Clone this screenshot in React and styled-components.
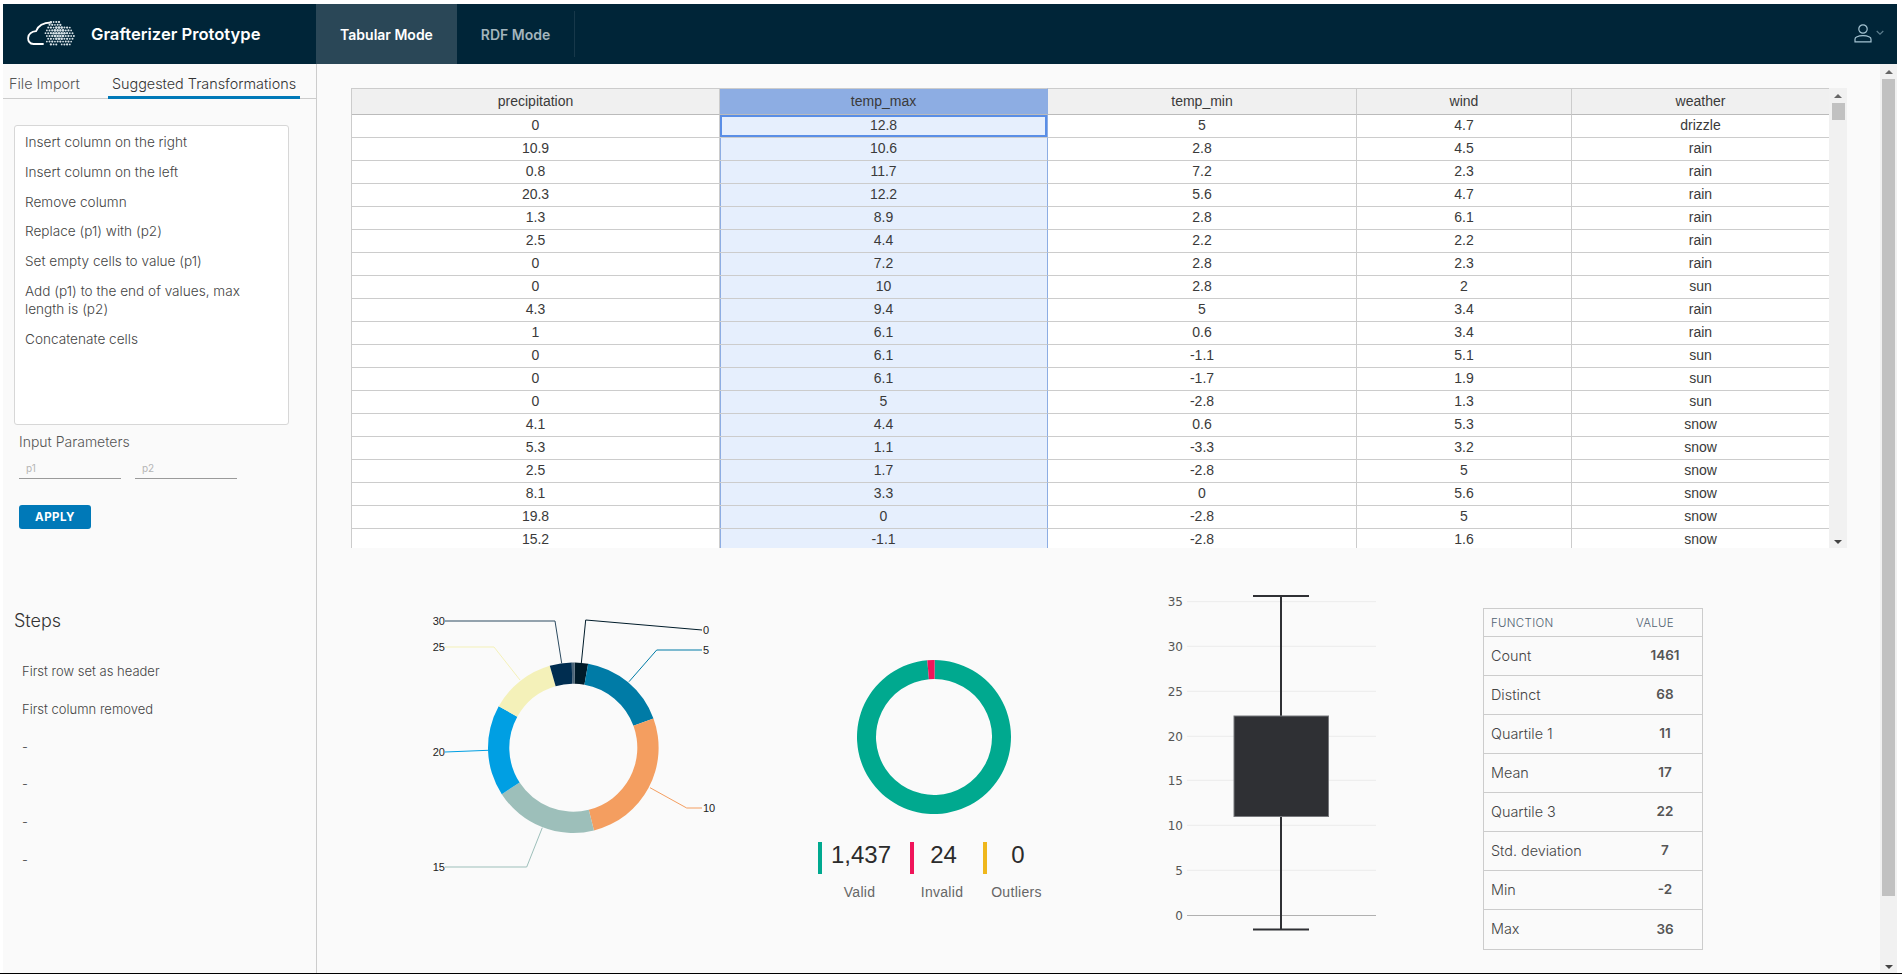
import React from 'react';
import styled, { createGlobalStyle } from 'styled-components';

const GlobalStyle = createGlobalStyle`
  * { box-sizing: border-box; }
  html, body { margin: 0; padding: 0; background: #fff; }
  body { font-family: Inter, "Open Sans", sans-serif; color: #565656; }
`;

const Page = styled.div`
  width: 1902px;
  height: 974px;
  padding: 4px 5px 0 3px;
  border-bottom: 1px solid #000;
  display: flex;
  flex-direction: column;
  overflow: hidden;
`;

const Header = styled.header`
  height: 60px;
  flex: none;
  display: flex;
  align-items: stretch;
  background: #002538;
`;

const Brand = styled.div`
  width: 313px;
  padding-left: 24px;
  display: flex;
  align-items: center;
  gap: 16px;
`;

const BrandName = styled.span`
  color: #fff;
  font-size: 16.6px;
  font-weight: 600;
  white-space: nowrap;
`;

const ModeTab = styled.div`
  width: ${(p) => p.$width}px;
  display: flex;
  align-items: center;
  justify-content: center;
  font-size: 14px;
  font-weight: 600;
  color: ${(p) => (p.$active ? '#fff' : '#a3b4bd')};
  background: ${(p) => (p.$active ? '#2a4757' : 'transparent')};
`;

const ModeDivider = styled.div`
  width: 1px;
  height: 46px;
  margin-top: 7px;
  background: #17384a;
`;

const UserBox = styled.div`
  margin-left: auto;
  padding: 20px 13px 0 0;
  display: flex;
  gap: 4px;
`;

const Body = styled.div`
  flex: 1;
  min-height: 0;
  display: flex;
`;

const Sidebar = styled.aside`
  width: 314px;
  flex: none;
  background: #fafafa;
  border-right: 1px solid #ccc;
`;

const SideTabs = styled.div`
  height: 35px;
  display: grid;
  grid-template-columns: 105px 192px;
  border-bottom: 1px solid #ccc;
  font-size: 14.4px;
  font-weight: 300;
  line-height: 40px;
`;

const SideTab = styled.div`
  padding-left: ${(p) => (p.$active ? '0' : '6px')};
  text-align: ${(p) => (p.$active ? 'center' : 'left')};
  color: ${(p) => (p.$active ? '#333' : '#555')};
  white-space: nowrap;
  border-bottom: ${(p) => (p.$active ? '3px solid #0079b8' : 'none')};
  height: 35px;
`;

const Panel = styled.div`
  padding: 26px 0 0 11px;
`;

const ListBox = styled.div`
  width: 275px;
  height: 300px;
  padding: 1px 12px 2px 10px;
  background: #fff;
  border: 1px solid #d7d7d7;
  border-radius: 3px;
`;

const ListItem = styled.div`
  padding: 6px 0 5.8px;
  font-size: 13.6px;
  font-weight: 300;
  line-height: 18px;
  color: #444;
`;

const ParamTitle = styled.div`
  margin: 8px 0 0 5px;
  font-size: 14px;
  font-weight: 300;
  line-height: 18px;
  color: #555;
`;

const ParamRow = styled.div`
  margin: 8px 0 0 5px;
  display: flex;
  gap: 14px;
`;

const ParamInput = styled.input`
  width: 102px;
  height: 20px;
  padding: 0 7px 2px;
  border: none;
  border-bottom: 1px solid #9a9a9a;
  background: transparent;
  font-family: inherit;
  font-size: 10px;
  &::placeholder { color: #b5b5b5; }
`;

const ApplyButton = styled.button`
  display: block;
  width: 72px;
  height: 24px;
  margin: 26px 0 0 5px;
  padding: 0;
  border: none;
  border-radius: 3px;
  background: #0079b8;
  color: #fff;
  font-family: inherit;
  font-size: 11.5px;
  font-weight: 700;
  letter-spacing: 0.5px;
`;

const StepsTitle = styled.h3`
  margin: 80px 0 0;
  font-size: 18px;
  font-weight: 300;
  line-height: 24px;
  color: #333;
`;

const StepList = styled.div`
  margin-top: 19px;
  padding-left: 8px;
`;

const StepItem = styled.div`
  height: 37.8px;
  font-size: 13px;
  font-weight: 300;
  line-height: 38px;
  color: #444;
`;

const Main = styled.main`
  flex: 1;
  min-width: 0;
  display: flex;
  background: #fafafa;
`;

const Content = styled.div`
  flex: 1;
  min-width: 0;
  padding: 24px 0 0 34px;
`;

const TableFrame = styled.div`
  width: 1496px;
  height: 460px;
  display: flex;
`;

const TableClip = styled.div`
  width: 1478px;
  height: 460px;
  overflow: hidden;
  background: #fff;
`;

const DataTable = styled.table`
  width: 1478px;
  table-layout: fixed;
  border-collapse: separate;
  border-spacing: 0;
  font-family: "Liberation Sans", Arial, sans-serif;
  font-size: 14px;
  color: #3a3a3a;
  border-left: 1px solid #ccc;
`;

const HeadCell = styled.th`
  height: 27px;
  padding: 0 0 2px;
  font-weight: 400;
  text-align: center;
  background: ${(p) => (p.$selected ? '#8dade3' : '#f0f0f0')};
  color: #3a3a3a;
  border-top: 1px solid #ccc;
  border-bottom: 1px solid #bbb;
  border-right: 1px solid ${(p) => (p.$selected ? '#8dade3' : '#ccc')};
`;

const Cell = styled.td`
  height: 23px;
  padding: 0 0 2px;
  text-align: center;
  background: ${(p) => (p.$selected ? '#e6effd' : '#fff')};
  border-bottom: 1px solid #ccc;
  border-right: 1px solid ${(p) => (p.$selected ? '#8dade3' : '#ccc')};
  box-shadow: ${(p) => {
    if (p.$focused) return 'inset 0 0 0 2px #5a8ee6';
    return p.$selected ? 'inset 1px 0 0 #8dade3' : 'none';
  }};
`;

const ScrollTrack = styled.div`
  width: ${(p) => p.$width}px;
  flex: none;
  height: ${(p) => p.$height};
  padding: 0 2px;
  display: flex;
  flex-direction: column;
  align-items: center;
  background: #f1f1f1;
`;

const ArrowUp = styled.div`
  width: 0;
  height: 0;
  margin: 6px 0 5px;
  border-left: 4px solid transparent;
  border-right: 4px solid transparent;
  border-bottom: 4px solid #666;
`;

const ArrowDown = styled.div`
  width: 0;
  height: 0;
  margin: auto 0 4px;
  border-left: 4px solid transparent;
  border-right: 4px solid transparent;
  border-top: 4px solid #444;
`;

const ScrollThumb = styled.div`
  width: 13px;
  height: ${(p) => p.$height}px;
  background: #c1c1c1;
`;

const ChartRow = styled.div`
  margin-top: 32px;
  padding-left: 69px;
  display: flex;
  align-items: flex-start;
`;

const PieBox = styled.div`
  width: 320px;
  height: 300px;
  margin-top: 10px;
`;

const QualityBox = styled.div`
  width: 248px;
  margin: 80px 0 0 70px;
  display: flex;
  flex-direction: column;
  align-items: center;
`;

const Legend = styled.div`
  width: 100%;
  margin-top: 28px;
  padding-left: 8px;
  display: grid;
  grid-template-columns: 92px 73px 76px;
`;

const LegendValue = styled.div`
  height: 32px;
  padding-right: 10px;
  border-left: 4px solid ${(p) => p.$color};
  font-family: "Liberation Sans", Arial, sans-serif;
  font-size: 24px;
  line-height: 26px;
  color: #2b2b2b;
  text-align: center;
`;

const LegendLabel = styled.div`
  margin-top: 9px;
  padding-right: 9px;
  font-family: "Liberation Sans", Arial, sans-serif;
  font-size: 14px;
  letter-spacing: 0.3px;
  line-height: 18px;
  color: #666;
  text-align: center;
  white-space: nowrap;
`;

const BoxBox = styled.div`
  width: 300px;
  height: 370px;
  margin-left: 72px;
`;

const StatsTable = styled.div`
  width: 220px;
  margin: 28px 0 0 53px;
  border: 1px solid #ccc;
  background: #fafafa;
`;

const StatsRow = styled.div`
  height: ${(p) => (p.$head ? '28px' : '39px')};
  display: grid;
  grid-template-columns: 145px 1fr;
  align-items: center;
  padding-left: 7px;
  padding-bottom: ${(p) => (p.$head ? '0' : '2px')};
  border-bottom: ${(p) => (p.$last ? 'none' : '1px solid #ccc')};
`;

const StatsHead = styled.span`
  font-size: 11.5px;
  font-weight: 300;
  letter-spacing: 0.3px;
  text-transform: uppercase;
  color: #4f6170;
  text-align: ${(p) => (p.$center ? 'center' : 'left')};
  padding-right: ${(p) => (p.$center ? '30px' : '0')};
`;

const StatsName = styled.span`
  font-size: 14.4px;
  font-weight: 300;
  color: #444;
`;

const StatsValue = styled.span`
  font-size: 13.5px;
  font-weight: 600;
  color: #555;
  text-align: center;
  padding-right: 8px;
`;

const columns = ['precipitation', 'temp_max', 'temp_min', 'wind', 'weather'];
const columnWidths = [368, 328, 309, 215, 258];

const rows = [
  ['0', '12.8', '5', '4.7', 'drizzle'],
  ['10.9', '10.6', '2.8', '4.5', 'rain'],
  ['0.8', '11.7', '7.2', '2.3', 'rain'],
  ['20.3', '12.2', '5.6', '4.7', 'rain'],
  ['1.3', '8.9', '2.8', '6.1', 'rain'],
  ['2.5', '4.4', '2.2', '2.2', 'rain'],
  ['0', '7.2', '2.8', '2.3', 'rain'],
  ['0', '10', '2.8', '2', 'sun'],
  ['4.3', '9.4', '5', '3.4', 'rain'],
  ['1', '6.1', '0.6', '3.4', 'rain'],
  ['0', '6.1', '-1.1', '5.1', 'sun'],
  ['0', '6.1', '-1.7', '1.9', 'sun'],
  ['0', '5', '-2.8', '1.3', 'sun'],
  ['4.1', '4.4', '0.6', '5.3', 'snow'],
  ['5.3', '1.1', '-3.3', '3.2', 'snow'],
  ['2.5', '1.7', '-2.8', '5', 'snow'],
  ['8.1', '3.3', '0', '5.6', 'snow'],
  ['19.8', '0', '-2.8', '5', 'snow'],
  ['15.2', '-1.1', '-2.8', '1.6', 'snow'],
];

const transformations = [
  'Insert column on the right',
  'Insert column on the left',
  'Remove column',
  'Replace (p1) with (p2)',
  'Set empty cells to value (p1)',
  'Add (p1) to the end of values, max length is (p2)',
  'Concatenate cells',
];

const steps = ['First row set as header', 'First column removed', '-', '-', '-', '-'];

const stats = [
  ['Count', '1461'],
  ['Distinct', '68'],
  ['Quartile 1', '11'],
  ['Mean', '17'],
  ['Quartile 3', '22'],
  ['Std. deviation', '7'],
  ['Min', '-2'],
  ['Max', '36'],
];

// clockwise degrees from 12 o'clock
const arc = (cx, cy, r1, r2, from, to) => {
  const pt = (r, a) => {
    const rad = ((a - 90) * Math.PI) / 180;
    return `${(cx + r * Math.cos(rad)).toFixed(2)} ${(cy + r * Math.sin(rad)).toFixed(2)}`;
  };
  const large = to - from > 180 ? 1 : 0;
  return `M${pt(r1, from)}A${r1} ${r1} 0 ${large} 1 ${pt(r1, to)}L${pt(r2, to)}A${r2} ${r2} 0 ${large} 0 ${pt(r2, from)}Z`;
};

const pieSlices = [
  { from: 1, to: 10, color: '#001b29' },
  { from: 10, to: 70, color: '#007ba6' },
  { from: 70, to: 166, color: '#f49e60' },
  { from: 166, to: 237, color: '#9dbfba' },
  { from: 237, to: 299, color: '#009fe3' },
  { from: 299, to: 344, color: '#f4f1b9' },
  { from: 344, to: 359, color: '#002d50' },
  { from: 359, to: 361, color: '#4a6478' },
];

const pieLabels = [
  { text: '30', x: 25, y: 31, points: '25,31 135,31 141.7,73.3', color: '#2c4a60', side: 'end' },
  { text: '0', x: 282, y: 40, points: '282,40 165.7,30 161.3,73.3', color: '#001b29', side: 'start' },
  { text: '5', x: 282, y: 60, points: '282,60 236.7,60 209,91.7', color: '#007ba6', side: 'start' },
  { text: '10', x: 282, y: 218, points: '282,218 266.7,218 230,197.7', color: '#f49e60', side: 'start' },
  { text: '15', x: 25, y: 277, points: '25,277 106.7,277 122.3,237.7', color: '#9dbfba', side: 'end' },
  { text: '20', x: 25, y: 162, points: '25,162 68,160.3', color: '#009fe3', side: 'end' },
  { text: '25', x: 25, y: 57, points: '25,57 74,57 100,90', color: '#f4f1b9', side: 'end' },
];

const boxTicks = [
  { label: '35', y: 21.7 },
  { label: '30', y: 66.3 },
  { label: '25', y: 111.3 },
  { label: '20', y: 156.3 },
  { label: '15', y: 200.3 },
  { label: '10', y: 245.3 },
  { label: '5', y: 290.3 },
];

// the right half of the logo is a cloud made of dots
const cloudDots = [];
for (let row = 0; row < 9; row += 1) {
  for (let col = 0; col < 11; col += 1) {
    const x = 18.5 + col * 2.7 + (row % 2 ? 1.35 : 0);
    const y = 1 + row * 2.8;
    const inside =
      Math.hypot(x - 28, y - 10) < 10 ||
      Math.hypot(x - 38, y - 15) < 10 ||
      Math.hypot(x - 26, y - 18) < 7;
    const middle = Math.hypot(x - 32, y - 13) < 7;
    if (inside) cloudDots.push({ x, y, r: middle ? 1.3 : 0.9 + ((col * 7 + row * 3) % 3) * 0.12 });
  }
}

const Logo = () => (
  <svg width="48" height="26" viewBox="0 0 48 26" fill="none">
    <path
      d="M16 23H6.5C2.5 23 .8 19.5 1.2 16.5C1.8 12.8 5 10.6 9 10.2C11 5 16.5 1.6 24 1.5"
      stroke="#fff"
      strokeWidth="1.8"
      strokeLinecap="round"
    />
    {cloudDots.map((d) => (
      <circle key={`${d.x}-${d.y}`} cx={d.x} cy={d.y} r={d.r} fill="#d8e2e7" />
    ))}
  </svg>
);

const UserIcon = () => (
  <svg width="18" height="19" viewBox="0 0 18 19" fill="none" stroke="#a4c4d2" strokeWidth="1.2">
    <circle cx="9" cy="5" r="4.2" />
    <path d="M1 17.8v-2.6c0-1 .6-1.8 1.5-2.2C4.3 12.2 6.5 11.7 9 11.7s4.7.5 6.5 1.3c.9.4 1.5 1.2 1.5 2.2v2.6z" />
  </svg>
);

const Chevron = () => (
  <svg width="8" height="6" viewBox="0 0 8 6" fill="none" stroke="#5d7f8e" strokeWidth="1.1" style={{ marginTop: 6 }}>
    <path d="M.7 1l3.3 3.2L7.3 1" />
  </svg>
);

const PieChart = () => (
  <svg width="320" height="300" viewBox="0 0 320 300">
    {pieSlices.map((s) => (
      <path key={s.from} d={arc(153.3, 157.7, 85.3, 64, s.from, s.to)} fill={s.color} />
    ))}
    {pieLabels.map((l) => (
      <g key={l.text}>
        <polyline points={l.points} fill="none" stroke={l.color} strokeWidth="1" />
        <text
          x={l.side === 'end' ? l.x : l.x + 1}
          y={l.y + 4}
          textAnchor={l.side}
          fontFamily="Liberation Sans, Arial, sans-serif"
          fontSize="11"
          fill="#222"
        >
          {l.text}
        </text>
      </g>
    ))}
  </svg>
);

const QualityRing = () => (
  <svg width="154" height="154" viewBox="0 0 154 154">
    <path d={arc(77, 77, 77, 58, 0.5, 355)} fill="#00a98f" />
    <path d={arc(77, 77, 77, 58, 355, 360.5)} fill="#f0145a" />
  </svg>
);

const BoxPlot = () => (
  <svg width="300" height="370" viewBox="0 0 300 370">
    {boxTicks.map((t) => (
      <line key={t.label} x1="57" x2="246" y1={t.y} y2={t.y} stroke="#ececec" strokeWidth="1" />
    ))}
    <line x1="57" x2="246" y1="335.5" y2="335.5" stroke="#b0b0b0" strokeWidth="1" />
    {[...boxTicks, { label: '0', y: 335.3 }].map((t) => (
      <text
        key={t.label}
        x="53"
        y={t.y + 4.5}
        textAnchor="end"
        fontFamily="DejaVu Sans, sans-serif"
        fontSize="12"
        fill="#555"
      >
        {t.label}
      </text>
    ))}
    <line x1="151" x2="151" y1="16" y2="349.5" stroke="#2f3034" strokeWidth="2" />
    <line x1="123" x2="179" y1="16" y2="16" stroke="#2f3034" strokeWidth="2" />
    <line x1="123" x2="179" y1="349.5" y2="349.5" stroke="#2f3034" strokeWidth="2" />
    <rect x="104" y="136" width="94.5" height="100.5" fill="#2f3034" stroke="#77787c" strokeWidth="1" />
  </svg>
);

const App = () => (
  <Page>
    <GlobalStyle />
    <Header>
      <Brand>
        <Logo />
        <BrandName>Grafterizer Prototype</BrandName>
      </Brand>
      <ModeTab $width={141} $active>Tabular Mode</ModeTab>
      <ModeTab $width={117}>RDF Mode</ModeTab>
      <ModeDivider />
      <UserBox>
        <UserIcon />
        <Chevron />
      </UserBox>
    </Header>
    <Body>
      <Sidebar>
        <SideTabs>
          <SideTab>File Import</SideTab>
          <SideTab $active>Suggested Transformations</SideTab>
        </SideTabs>
        <Panel>
          <ListBox>
            {transformations.map((item) => (
              <ListItem key={item}>{item}</ListItem>
            ))}
          </ListBox>
          <ParamTitle>Input Parameters</ParamTitle>
          <ParamRow>
            <ParamInput placeholder="p1" />
            <ParamInput placeholder="p2" />
          </ParamRow>
          <ApplyButton>APPLY</ApplyButton>
          <StepsTitle>Steps</StepsTitle>
          <StepList>
            {steps.map((step, i) => (
              <StepItem key={i}>{step}</StepItem>
            ))}
          </StepList>
        </Panel>
      </Sidebar>
      <Main>
        <Content>
          <TableFrame>
            <TableClip>
              <DataTable>
                <colgroup>
                  {columnWidths.map((w, i) => (
                    <col key={i} width={w} />
                  ))}
                </colgroup>
                <thead>
                  <tr>
                    {columns.map((c, i) => (
                      <HeadCell key={c} $selected={i === 1}>{c}</HeadCell>
                    ))}
                  </tr>
                </thead>
                <tbody>
                  {rows.map((row, r) => (
                    <tr key={r}>
                      {row.map((value, c) => (
                        <Cell key={c} $selected={c === 1} $focused={c === 1 && r === 0}>{value}</Cell>
                      ))}
                    </tr>
                  ))}
                </tbody>
              </DataTable>
            </TableClip>
            <ScrollTrack $width={18} $height="460px">
              <ArrowUp />
              <ScrollThumb $height={17} />
              <ArrowDown />
            </ScrollTrack>
          </TableFrame>
          <ChartRow>
            <PieBox>
              <PieChart />
            </PieBox>
            <QualityBox>
              <QualityRing />
              <Legend>
                <div>
                  <LegendValue $color="#00a98f">1,437</LegendValue>
                  <LegendLabel>Valid</LegendLabel>
                </div>
                <div>
                  <LegendValue $color="#f0145a">24</LegendValue>
                  <LegendLabel>Invalid</LegendLabel>
                </div>
                <div>
                  <LegendValue $color="#efb71c">0</LegendValue>
                  <LegendLabel>Outliers</LegendLabel>
                </div>
              </Legend>
            </QualityBox>
            <BoxBox>
              <BoxPlot />
            </BoxBox>
            <StatsTable>
              <StatsRow $head>
                <StatsHead>Function</StatsHead>
                <StatsHead $center>Value</StatsHead>
              </StatsRow>
              {stats.map(([name, value], i) => (
                <StatsRow key={name} $last={i === stats.length - 1}>
                  <StatsName>{name}</StatsName>
                  <StatsValue>{value}</StatsValue>
                </StatsRow>
              ))}
            </StatsTable>
          </ChartRow>
        </Content>
        <ScrollTrack $width={17} $height="100%">
          <ArrowUp />
          <ScrollThumb $height={817} />
          <ArrowDown />
        </ScrollTrack>
      </Main>
    </Body>
  </Page>
);

export default App;
